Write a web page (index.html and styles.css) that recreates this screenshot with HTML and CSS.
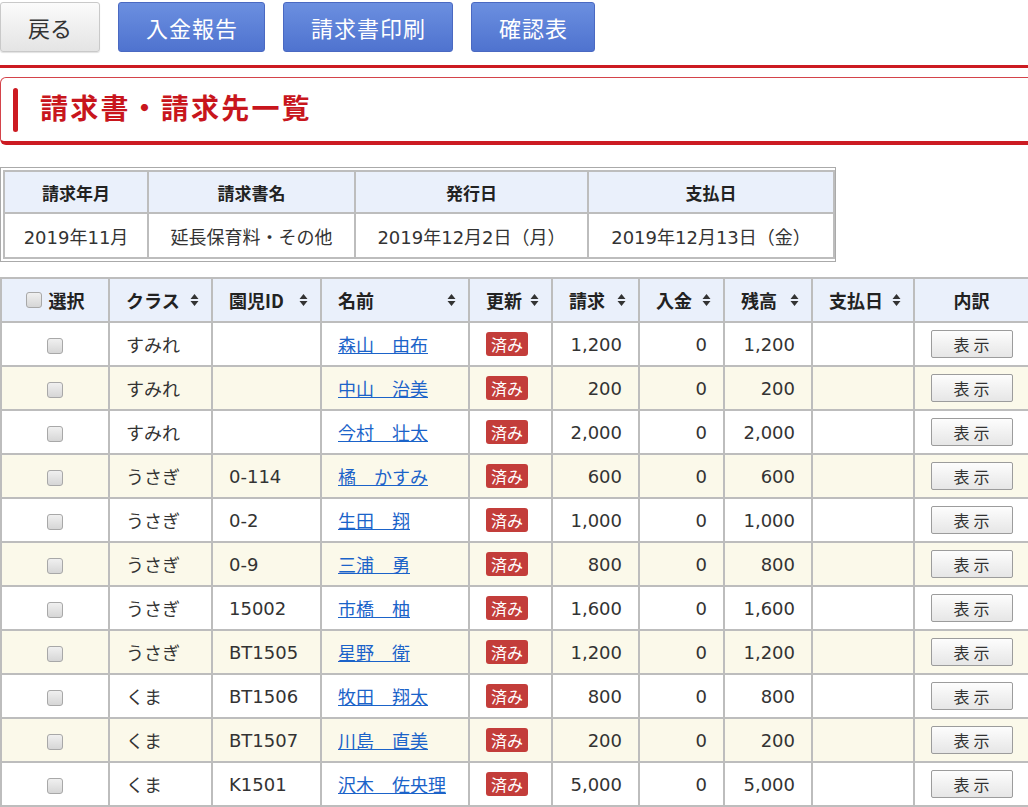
FILE: index.html
```html
<!DOCTYPE html>
<html lang="ja">
<head>
<meta charset="utf-8">
<title>請求書・請求先一覧</title>
<link rel="stylesheet" href="styles.css">
</head>
<body>
<div class="page">
  <div class="toolbar">
    <button class="btn btn-plain">戻る</button>
    <button class="btn btn-blue">入金報告</button>
    <button class="btn btn-blue">請求書印刷</button>
    <button class="btn btn-blue">確認表</button>
  </div>

  <div class="rule"></div>

  <div class="title-box">
    <span class="title-bar"></span>
    <h1 class="title">請求書・請求先一覧</h1>
  </div>

  <div class="summary">
    <table class="summary-table">
      <colgroup>
        <col class="s1"><col class="s2"><col class="s3"><col class="s4">
      </colgroup>
      <tr class="s-head">
        <th>請求年月</th><th>請求書名</th><th>発行日</th><th>支払日</th>
      </tr>
      <tr class="s-body">
        <td>2019年11月</td><td>延長保育料・その他</td><td>2019年12月2日（月）</td><td>2019年12月13日（金）</td>
      </tr>
    </table>
  </div>

  <table class="list">
    <colgroup>
      <col class="c-sel"><col class="c-class"><col class="c-id"><col class="c-name"><col class="c-upd">
      <col class="c-bill"><col class="c-paid"><col class="c-bal"><col class="c-date"><col class="c-det">
    </colgroup>
    <thead>
      <tr>
        <th class="h-center"><span class="chk chk-head"></span>選択</th>
        <th><div class="hcell"><span>クラス</span><svg class="sort" viewBox="0 0 8 12"><path d="M0 5L4 0L8 5Z M0 7L4 12L8 7Z"/></svg></div></th>
        <th><div class="hcell"><span>園児ID</span><svg class="sort" viewBox="0 0 8 12"><path d="M0 5L4 0L8 5Z M0 7L4 12L8 7Z"/></svg></div></th>
        <th><div class="hcell"><span>名前</span><svg class="sort" viewBox="0 0 8 12"><path d="M0 5L4 0L8 5Z M0 7L4 12L8 7Z"/></svg></div></th>
        <th><div class="hcell"><span>更新</span><svg class="sort" viewBox="0 0 8 12"><path d="M0 5L4 0L8 5Z M0 7L4 12L8 7Z"/></svg></div></th>
        <th><div class="hcell"><span>請求</span><svg class="sort" viewBox="0 0 8 12"><path d="M0 5L4 0L8 5Z M0 7L4 12L8 7Z"/></svg></div></th>
        <th><div class="hcell"><span>入金</span><svg class="sort" viewBox="0 0 8 12"><path d="M0 5L4 0L8 5Z M0 7L4 12L8 7Z"/></svg></div></th>
        <th><div class="hcell"><span>残高</span><svg class="sort" viewBox="0 0 8 12"><path d="M0 5L4 0L8 5Z M0 7L4 12L8 7Z"/></svg></div></th>
        <th><div class="hcell"><span>支払日</span><svg class="sort" viewBox="0 0 8 12"><path d="M0 5L4 0L8 5Z M0 7L4 12L8 7Z"/></svg></div></th>
        <th class="h-center">内訳</th>
      </tr>
    </thead>
    <tbody>
      <tr><td class="ctr"><span class="chk"></span></td><td>すみれ</td><td></td><td><a href="#">森山　由布</a></td><td><span class="badge">済み</span></td><td class="num">1,200</td><td class="num">0</td><td class="num">1,200</td><td></td><td class="ctr"><button class="show">表示</button></td></tr>
      <tr><td class="ctr"><span class="chk"></span></td><td>すみれ</td><td></td><td><a href="#">中山　治美</a></td><td><span class="badge">済み</span></td><td class="num">200</td><td class="num">0</td><td class="num">200</td><td></td><td class="ctr"><button class="show">表示</button></td></tr>
      <tr><td class="ctr"><span class="chk"></span></td><td>すみれ</td><td></td><td><a href="#">今村　壮太</a></td><td><span class="badge">済み</span></td><td class="num">2,000</td><td class="num">0</td><td class="num">2,000</td><td></td><td class="ctr"><button class="show">表示</button></td></tr>
      <tr><td class="ctr"><span class="chk"></span></td><td>うさぎ</td><td>0-114</td><td><a href="#">橘　かすみ</a></td><td><span class="badge">済み</span></td><td class="num">600</td><td class="num">0</td><td class="num">600</td><td></td><td class="ctr"><button class="show">表示</button></td></tr>
      <tr><td class="ctr"><span class="chk"></span></td><td>うさぎ</td><td>0-2</td><td><a href="#">生田　翔</a></td><td><span class="badge">済み</span></td><td class="num">1,000</td><td class="num">0</td><td class="num">1,000</td><td></td><td class="ctr"><button class="show">表示</button></td></tr>
      <tr><td class="ctr"><span class="chk"></span></td><td>うさぎ</td><td>0-9</td><td><a href="#">三浦　勇</a></td><td><span class="badge">済み</span></td><td class="num">800</td><td class="num">0</td><td class="num">800</td><td></td><td class="ctr"><button class="show">表示</button></td></tr>
      <tr><td class="ctr"><span class="chk"></span></td><td>うさぎ</td><td>15002</td><td><a href="#">市橋　柚</a></td><td><span class="badge">済み</span></td><td class="num">1,600</td><td class="num">0</td><td class="num">1,600</td><td></td><td class="ctr"><button class="show">表示</button></td></tr>
      <tr><td class="ctr"><span class="chk"></span></td><td>うさぎ</td><td>BT1505</td><td><a href="#">星野　衛</a></td><td><span class="badge">済み</span></td><td class="num">1,200</td><td class="num">0</td><td class="num">1,200</td><td></td><td class="ctr"><button class="show">表示</button></td></tr>
      <tr><td class="ctr"><span class="chk"></span></td><td>くま</td><td>BT1506</td><td><a href="#">牧田　翔太</a></td><td><span class="badge">済み</span></td><td class="num">800</td><td class="num">0</td><td class="num">800</td><td></td><td class="ctr"><button class="show">表示</button></td></tr>
      <tr><td class="ctr"><span class="chk"></span></td><td>くま</td><td>BT1507</td><td><a href="#">川島　直美</a></td><td><span class="badge">済み</span></td><td class="num">200</td><td class="num">0</td><td class="num">200</td><td></td><td class="ctr"><button class="show">表示</button></td></tr>
      <tr><td class="ctr"><span class="chk"></span></td><td>くま</td><td>K1501</td><td><a href="#">沢木　佐央理</a></td><td><span class="badge">済み</span></td><td class="num">5,000</td><td class="num">0</td><td class="num">5,000</td><td></td><td class="ctr"><button class="show">表示</button></td></tr>
    </tbody>
  </table>
</div>
</body>
</html>
```

FILE: styles.css
```css
html, body {
  margin: 0;
  padding: 0;
  overflow: hidden;
  background: #ffffff;
}

body {
  font-family: "DejaVu Sans", "Noto Sans CJK JP", sans-serif;
  font-size: 18px;
  color: #333333;
}

.page {
  width: 1028px;
}

/* toolbar */
.toolbar {
  display: flex;
  gap: 18px;
  padding-top: 2px;
}

.btn {
  height: 50px;
  padding: 0 26px 0 27px;
  font-family: "Noto Sans CJK JP", sans-serif;
  font-size: 22px;
  letter-spacing: 1px;
  border-radius: 3px;
  cursor: pointer;
}

.btn-plain {
  width: 100px;
  padding: 0;
  letter-spacing: 0;
  color: #333333;
  background: linear-gradient(#fbfbfb, #e4e4e4);
  border: 1px solid #c9c9c9;
  box-shadow: 0 1px 1px rgba(0, 0, 0, 0.12);
}

.btn-blue {
  color: #ffffff;
  background: linear-gradient(#6b8fe0, #4f73cf);
  border: 1px solid #4a69c2;
}

/* red rule + title */
.rule {
  margin-top: 13px;
  border-top: 3px solid #cc1b22;
}

.title-box {
  margin-top: 9px;
  margin-right: -8px;
  height: 63px;
  border: 1px solid #d4434a;
  border-bottom: 4px solid #cc1b22;
  border-radius: 6px;
  display: flex;
  align-items: center;
  padding-left: 12px;
}

.title-bar {
  width: 5px;
  height: 44px;
  border-radius: 3px;
  background: #cc1b22;
}

.title {
  margin: 0 0 5px 22px;
  font-family: "Noto Sans CJK JP", sans-serif;
  font-size: 28px;
  font-weight: bold;
  letter-spacing: 2.2px;
  color: #c8161d;
}

/* summary table */
.summary {
  margin-top: 22px;
  width: 830px;
  border: 1px solid #aaaaaa;
  padding: 2px;
}

.summary-table {
  width: 100%;
  border-collapse: collapse;
  table-layout: fixed;
}

.s1 { width: 144px; }
.s2 { width: 207px; }
.s3 { width: 233px; }
.s4 { width: 246px; }

.summary-table th,
.summary-table td {
  border: 2px solid #bdbdbd;
  text-align: center;
  padding: 0;
  white-space: nowrap;
}

.s-head th {
  height: 40px;
  background: #eaf0fb;
  font-family: "Noto Sans CJK JP", sans-serif;
  font-weight: bold;
  font-size: 17px;
  color: #222222;
}

.s-body td {
  height: 43px;
}

/* main list */
.list {
  margin-top: 15px;
  width: 1028px;
  border-collapse: collapse;
  table-layout: fixed;
}

.c-sel { width: 108px; }
.c-class { width: 103px; }
.c-id { width: 109px; }
.c-name { width: 148px; }
.c-upd { width: 83px; }
.c-bill { width: 87px; }
.c-paid { width: 85px; }
.c-bal { width: 88px; }
.c-date { width: 102px; }
.c-det { width: 115px; }

.list th,
.list td {
  border: 2px solid #bdbdbd;
  padding: 0 16px;
  height: 42px;
  white-space: nowrap;
}

.list th {
  background: #eaf0fb;
  font-family: "Noto Sans CJK JP", sans-serif;
  font-weight: bold;
  font-size: 18px;
  color: #222222;
  text-align: left;
  padding: 0 12px 0 16px;
}

.list th.h-center {
  text-align: center;
  padding: 0;
}

.hcell {
  display: flex;
  align-items: center;
  justify-content: space-between;
}

.sort {
  width: 9px;
  height: 12px;
  fill: #333333;
  flex: none;
}

.list tbody tr:nth-child(even) td {
  background: #fbf9ea;
}

.list td.ctr {
  text-align: center;
  padding: 0;
}

.list td.num {
  text-align: right;
}

.list a {
  color: #1b63c9;
  text-decoration: underline;
}

.chk {
  display: inline-block;
  width: 14px;
  height: 14px;
  border: 1px solid #a8a8a8;
  border-radius: 3px;
  background: linear-gradient(#f0f0f0, #d6d6d6);
  vertical-align: middle;
}

.chk-head {
  margin-right: 7px;
  position: relative;
  top: -3px;
}

.badge {
  display: inline-block;
  padding: 1px 5px;
  border-radius: 3px;
  background: #c33d3a;
  color: #ffffff;
  font-family: "Noto Sans CJK JP", sans-serif;
  font-size: 16px;
  line-height: 22px;
}

.show {
  width: 82px;
  height: 28px;
  padding: 0;
  font-family: "Noto Sans CJK JP", sans-serif;
  font-size: 16px;
  letter-spacing: 4px;
  text-indent: 4px;
  color: #333333;
  background: linear-gradient(#fdfdfd, #e6e6e6);
  border: 1px solid #9c9c9c;
  border-radius: 2px;
  cursor: pointer;
}
```
